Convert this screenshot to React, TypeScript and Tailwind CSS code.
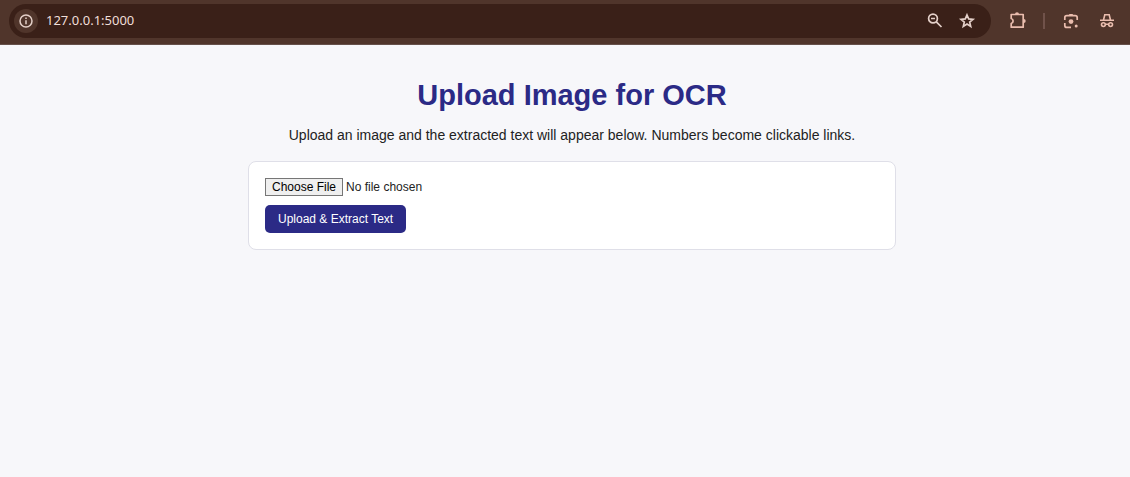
import React from "react";

function InfoIcon() {
  return (
    <svg viewBox="0 0 14 14" className="size-3.5" fill="none" stroke="currentColor" strokeWidth="1.5" aria-hidden="true">
      <circle cx="7" cy="7" r="6" />
      <path d="M7 6.2v4M7 3.6v1.5" />
    </svg>
  );
}

function ZoomOutIcon() {
  return (
    <svg viewBox="0 0 24 24" className="size-6" fill="none" stroke="currentColor" strokeWidth="1.7" aria-hidden="true">
      <circle cx="9" cy="9.500" r="4.400" />
      <path d="M12.300 12.800l5.200 5.200M7 9.500h4" />
    </svg>
  );
}

function StarIcon() {
  return (
    <svg viewBox="0 0 24 24" className="size-6" fill="none" stroke="currentColor" strokeWidth="1.7" aria-hidden="true">
      <path d="M11 6l1.700 3.900 4.300.4-3.300 2.800 1 4.300-3.700-2.300-3.700 2.300 1-4.300L5 10.300l4.300-.4z" />
    </svg>
  );
}

function ExtensionIcon() {
  return (
    <svg viewBox="0 0 24 24" className="size-6" aria-hidden="true">
      <path
        d="M5.200 5.500h12v12.700h-12v-3.700c1.200-.3 1.900-1.300 1.900-2.500s-.7-2.200-1.900-2.500z"
        fill="none"
        stroke="currentColor"
        strokeWidth="1.700"
        strokeLinejoin="round"
      />
      <path d="M9 5.200a2 2 0 0 1 4 0zM17.700 9.900a2 2 0 0 1 0 4z" fill="currentColor" />
    </svg>
  );
}

function LensIcon() {
  return (
    <svg viewBox="0 0 24 24" className="size-6" fill="none" stroke="currentColor" strokeWidth="1.700" aria-hidden="true">
      <path d="M6.800 11V8.700a2 2 0 0 1 2-2h8.400a2 2 0 0 1 2 2V11M6.800 14v2.400a2 2 0 0 0 2 2H13" />
      <path d="M10.500 6.500l1-1.500h3l1 1.500z" fill="currentColor" stroke="none" />
      <circle cx="13" cy="12.600" r="2.400" fill="currentColor" stroke="none" />
      <circle cx="18.200" cy="17" r="1.500" fill="currentColor" stroke="none" />
    </svg>
  );
}

function IncognitoIcon() {
  return (
    <svg viewBox="0 0 24 24" className="size-6" fill="none" stroke="currentColor" strokeWidth="1.600" aria-hidden="true">
      <path d="M6 11.200h14M9.500 11l1.300-5.300h4.400l1.300 5.300M11.300 15.200h3.400" />
      <circle cx="9.400" cy="15.600" r="1.900" />
      <circle cx="16.600" cy="15.600" r="1.900" />
    </svg>
  );
}

export default function App() {
  return (
    <div className="min-h-screen bg-[#f7f7fa] font-['Liberation_Sans',Arial,sans-serif] text-[#222222]">
      <header className="flex h-[45px] items-start border-b border-[#66504a] bg-[#50352b] pt-1 pl-[9px] text-[#eabdae]">
        <div className="flex h-[34px] flex-1 items-center rounded-full bg-[#3a2018] pr-[11px] pl-[5px] text-[#e4d0c9]">
          <button type="button" aria-label="View site information" className="flex size-6 items-center justify-center rounded-full bg-[#50352b]">
            <InfoIcon />
          </button>
          <input
            type="text"
            aria-label="Address"
            defaultValue="127.0.0.1:5000"
            className="min-w-0 flex-1 bg-transparent pl-2 font-['Noto_Sans',sans-serif] text-[13px] text-[#f0ded8] outline-none"
          />
          <div className="flex gap-2">
            <button type="button" aria-label="Zoom"><ZoomOutIcon /></button>
            <button type="button" aria-label="Bookmark this page"><StarIcon /></button>
          </div>
        </div>
        <div className="flex h-[34px] items-center pr-3 pl-[15px]">
          <button type="button" aria-label="Extensions"><ExtensionIcon /></button>
          <span className="mx-[13px] h-4 w-0.5 bg-[#70524a]" />
          <button type="button" aria-label="Search with Lens"><LensIcon /></button>
          <button type="button" aria-label="Incognito" className="ml-3"><IncognitoIcon /></button>
        </div>
      </header>
      <main className="pt-8 pl-3.5">
        <div className="mx-auto max-w-[648px]">
          <h1 className="text-center text-[29px] leading-9 font-bold text-[#2b2a86]">Upload Image for OCR</h1>
          <p className="mt-3 text-center text-sm leading-5">
            Upload an image and the extracted text will appear below. Numbers become clickable links.
          </p>
          <form
            onSubmit={(event) => event.preventDefault()}
            className="mt-4 flex flex-col items-start gap-[9px] rounded-lg border border-[#dfdfe8] bg-white p-4"
          >
            <input
              type="file"
              aria-label="Image file"
              className="text-xs leading-[18px] file:mr-[3px] file:h-[18px] file:rounded-none file:border file:border-solid file:border-[#767676] file:bg-[#efefef] file:px-1.5 file:text-xs file:leading-4 file:text-black"
            />
            <button type="submit" className="h-7 rounded-[5px] bg-[#2b2a86] px-[13px] text-xs text-white">
              Upload &amp; Extract Text
            </button>
          </form>
        </div>
      </main>
    </div>
  );
}
